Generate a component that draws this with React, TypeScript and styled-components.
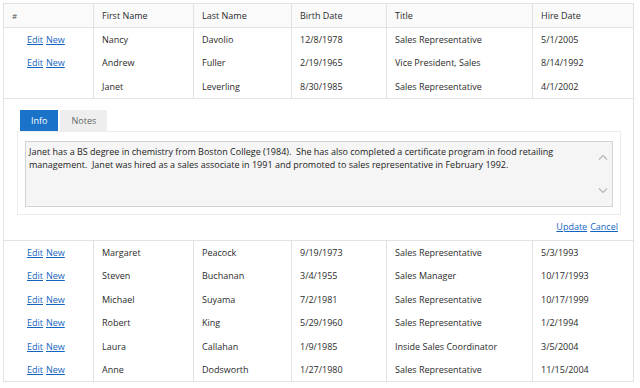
import styled, { createGlobalStyle } from 'styled-components';

const GlobalStyle = createGlobalStyle`
  *, *::before, *::after {
    box-sizing: border-box;
  }
  body {
    margin: 0;
    background: #ffffff;
    font-family: 'Open Sans', 'Noto Sans', Arial, sans-serif;
    font-size: 9px;
    color: #2b2b2b;
  }
`;

type Employee = {
  first: string;
  last: string;
  birth: string;
  title: string;
  hire: string;
  editing?: boolean;
};

const employees: Employee[] = [
  { first: 'Nancy', last: 'Davolio', birth: '12/8/1978', title: 'Sales Representative', hire: '5/1/2005' },
  { first: 'Andrew', last: 'Fuller', birth: '2/19/1965', title: 'Vice President, Sales', hire: '8/14/1992' },
  { first: 'Janet', last: 'Leverling', birth: '8/30/1985', title: 'Sales Representative', hire: '4/1/2002', editing: true },
  { first: 'Margaret', last: 'Peacock', birth: '9/19/1973', title: 'Sales Representative', hire: '5/3/1993' },
  { first: 'Steven', last: 'Buchanan', birth: '3/4/1955', title: 'Sales Manager', hire: '10/17/1993' },
  { first: 'Michael', last: 'Suyama', birth: '7/2/1981', title: 'Sales Representative', hire: '10/17/1999' },
  { first: 'Robert', last: 'King', birth: '5/29/1960', title: 'Sales Representative', hire: '1/2/1994' },
  { first: 'Laura', last: 'Callahan', birth: '1/9/1985', title: 'Inside Sales Coordinator', hire: '3/5/2004' },
  { first: 'Anne', last: 'Dodsworth', birth: '1/27/1980', title: 'Sales Representative', hire: '11/15/2004' },
];

const notes =
  'Janet has a BS degree in chemistry from Boston College (1984).  She has also completed a certificate program in food retailing\nmanagement.  Janet was hired as a sales associate in 1991 and promoted to sales representative in February 1992.';

const Page = styled.div`
  padding: 3px 0 0 3px;
`;

const Grid = styled.table`
  width: 630px;
  border-collapse: collapse;
  table-layout: fixed;
  border: 1px solid #e2e2e2;
`;

const HeadCell = styled.th<{ $w: number }>`
  width: ${(p) => p.$w}px;
  height: 24px;
  padding: 0 8px;
  text-align: left;
  font-weight: normal;
  color: #2b2b2b;
  background: #fafafa;
  border-right: 1px solid #e2e2e2;
  border-bottom: 1px solid #e2e2e2;
  white-space: nowrap;
`;

const HashCell = styled(HeadCell)`
  font-size: 8px;
  color: #555555;
`;

const Cell = styled.td`
  height: 23.6px;
  padding: 0 8px;
  border-right: 1px solid #e2e2e2;
  white-space: nowrap;
  overflow: hidden;
`;

const CmdCell = styled(Cell)`
  padding-left: 23px;
`;

const Link = styled.a`
  color: #1565c0;
  text-decoration: underline;
  cursor: pointer;
  margin-right: 3px;
`;

const DetailCell = styled.td`
  padding: 11px 12px 6px 13px;
  border-top: 1px solid #e2e2e2;
  border-bottom: 1px solid #e2e2e2;
`;

const Tabs = styled.div`
  display: flex;
  gap: 2px;
  padding-left: 3px;
`;

const Tab = styled.div<{ $active?: boolean }>`
  height: 21px;
  padding: 0 ${(p) => (p.$active ? 11 : 11)}px;
  display: flex;
  align-items: center;
  background: ${(p) => (p.$active ? '#1a73c8' : '#eeeeee')};
  color: ${(p) => (p.$active ? '#ffffff' : '#666666')};
`;

const Panel = styled.div`
  border: 1px solid #ececec;
  padding: 9px 7px 7px 7px;
`;

const NoteBox = styled.div`
  display: flex;
  height: 66px;
  background: #f5f5f5;
  border: 1px solid #d4d4d4;
`;

const NoteText = styled.div`
  flex: 1;
  padding: 3px 3px;
  line-height: 13.5px;
  white-space: pre-wrap;
  color: #222222;
`;

const ScrollBar = styled.div`
  width: 18px;
  display: flex;
  flex-direction: column;
  justify-content: space-between;
  align-items: center;
  padding: 12px 0 12px;
`;

const Actions = styled.div`
  display: flex;
  justify-content: flex-end;
  margin-top: 5px;
  height: 14px;
  align-items: center;
`;

const Chevron = ({ up }: { up?: boolean }) => (
  <svg width="10" height="6" viewBox="0 0 10 6">
    <path
      d={up ? 'M1 5.5 L5 1.5 L9 5.5' : 'M1 0.5 L5 4.5 L9 0.5'}
      fill="none"
      stroke="#b5b5b5"
      strokeWidth="1.2"
    />
  </svg>
);

export default function App() {
  return (
    <Page>
      <GlobalStyle />
      <Grid>
        <thead>
          <tr>
            <HashCell $w={90}>#</HashCell>
            <HeadCell $w={100}>First Name</HeadCell>
            <HeadCell $w={98}>Last Name</HeadCell>
            <HeadCell $w={95}>Birth Date</HeadCell>
            <HeadCell $w={146}>Title</HeadCell>
            <HeadCell $w={101}>Hire Date</HeadCell>
          </tr>
        </thead>
        <tbody>
          {employees.map((e) => (
            <>
              <tr key={e.first}>
                <CmdCell>
                  {!e.editing && (
                    <>
                      <Link>Edit</Link>
                      <Link>New</Link>
                    </>
                  )}
                </CmdCell>
                <Cell>{e.first}</Cell>
                <Cell>{e.last}</Cell>
                <Cell>{e.birth}</Cell>
                <Cell>{e.title}</Cell>
                <Cell>{e.hire}</Cell>
              </tr>
              {e.editing && (
                <tr key={e.first + '-detail'}>
                  <DetailCell colSpan={6}>
                    <Tabs>
                      <Tab $active>Info</Tab>
                      <Tab>Notes</Tab>
                    </Tabs>
                    <Panel>
                      <NoteBox>
                        <NoteText>{notes}</NoteText>
                        <ScrollBar>
                          <Chevron up />
                          <Chevron />
                        </ScrollBar>
                      </NoteBox>
                    </Panel>
                    <Actions>
                      <Link>Update</Link>
                      <Link>Cancel</Link>
                    </Actions>
                  </DetailCell>
                </tr>
              )}
            </>
          ))}
        </tbody>
      </Grid>
    </Page>
  );
}
